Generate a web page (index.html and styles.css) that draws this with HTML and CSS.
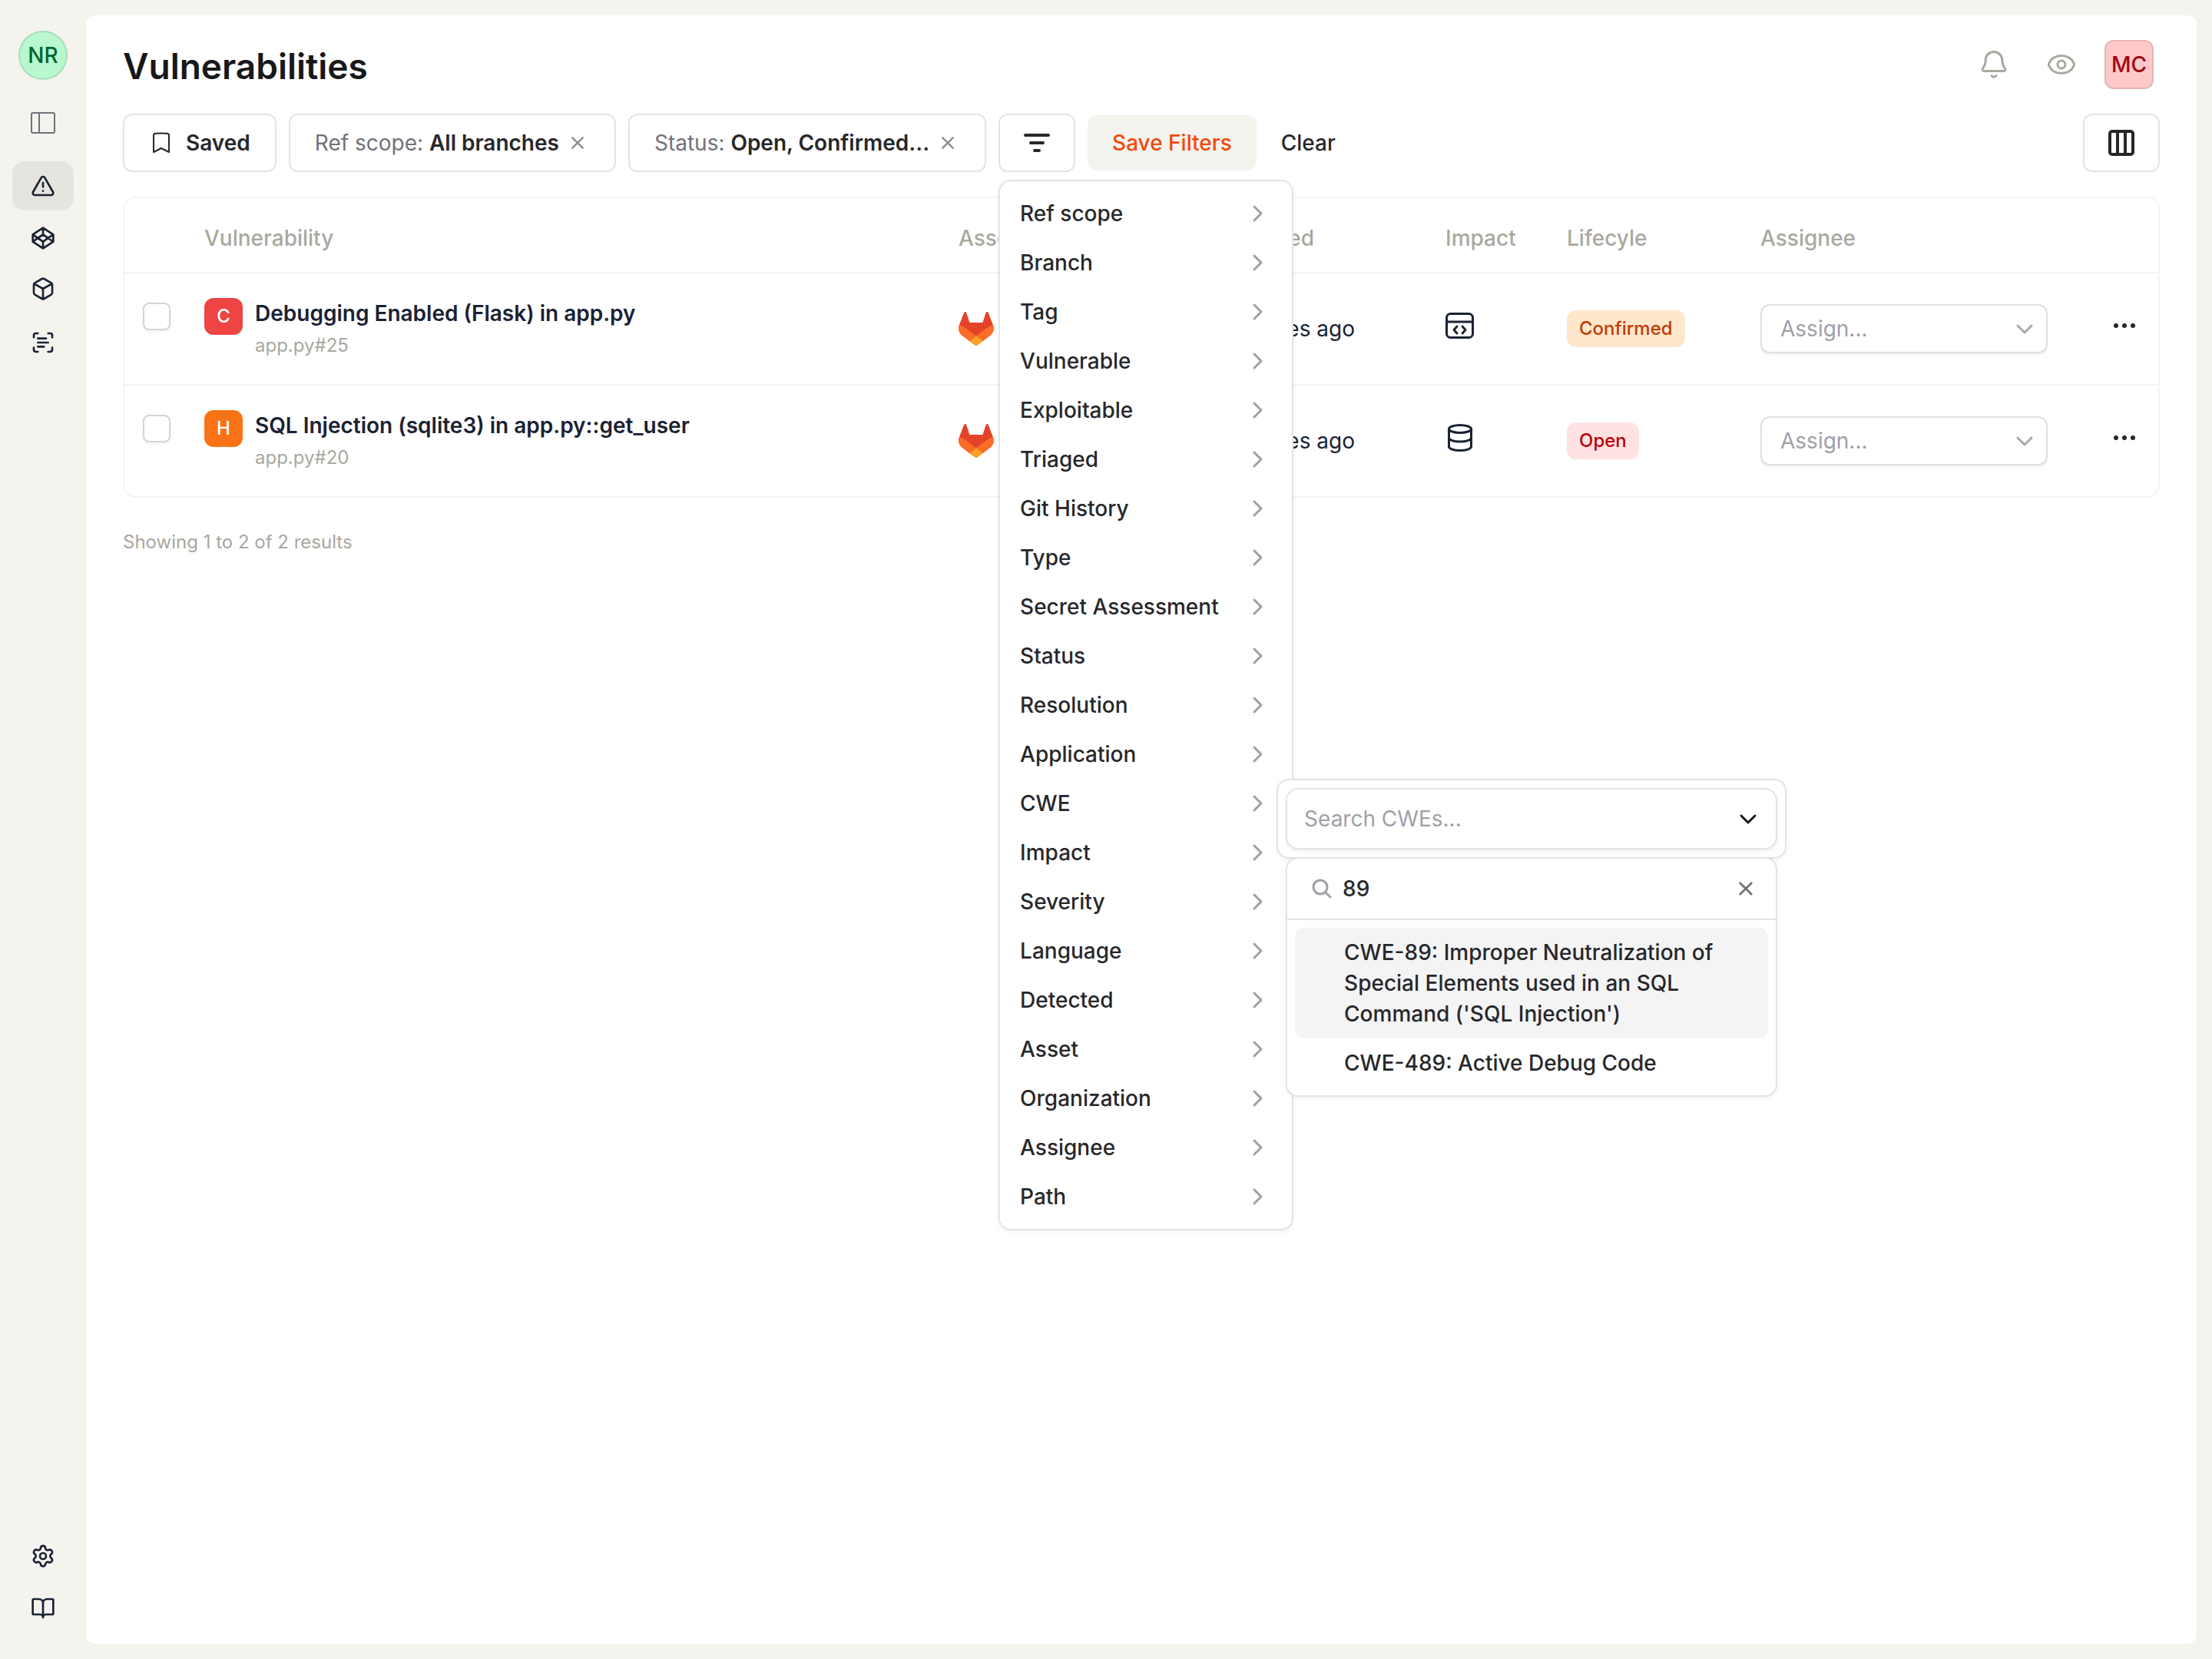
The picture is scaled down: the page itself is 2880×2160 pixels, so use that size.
FILE: index.html
```html
<!DOCTYPE html>
<html lang="en">

<head>
  <meta charset="UTF-8">
  <meta name="viewport" content="width=device-width, initial-scale=1">
  <title>Vulnerabilities</title>
  <link rel="stylesheet" href="styles.css">
</head>

<body>

  <!-- shared icons -->
  <svg class="sprite" aria-hidden="true">
    <symbol id="chevron-right" viewBox="0 0 24 24"><path d="M7 3l9 9-9 9"/></symbol>
    <symbol id="chevron-down" viewBox="0 0 24 24"><path d="M3 8l9 9 9-9"/></symbol>
    <symbol id="cross" viewBox="0 0 24 24"><path d="M4 4l16 16M20 4L4 20"/></symbol>
    <symbol id="dots" viewBox="0 0 36 8"><circle cx="7" cy="4" r="3"/><circle cx="18" cy="4" r="3"/><circle cx="29" cy="4" r="3"/></symbol>
    <symbol id="gitlab" viewBox="0 0 25 24">
      <path fill="#e24329" d="M24.507 9.5l-.034-.09L21.082.562a.896.896 0 0 0-1.694.091l-2.29 7.01H7.825L5.535.653a.898.898 0 0 0-1.694-.09L.451 9.411.416 9.5a6.297 6.297 0 0 0 2.09 7.278l.012.01.03.022 5.16 3.867 2.56 1.935 1.554 1.176a1.051 1.051 0 0 0 1.268 0l1.555-1.176 2.56-1.935 5.197-3.89.014-.01A6.297 6.297 0 0 0 24.507 9.5z"/>
      <path fill="#fc6d26" d="M24.507 9.5l-.034-.09a11.44 11.44 0 0 0-4.56 2.051l-7.447 5.632 4.742 3.584 5.197-3.89.014-.01A6.297 6.297 0 0 0 24.507 9.5z"/>
      <path fill="#fca326" d="M7.707 20.677l2.56 1.935 1.555 1.176a1.051 1.051 0 0 0 1.268 0l1.555-1.176 2.56-1.935-4.743-3.584-4.755 3.584z"/>
      <path fill="#fc6d26" d="M5.01 11.461a11.43 11.43 0 0 0-4.56-2.05L.416 9.5a6.297 6.297 0 0 0 2.09 7.278l.012.01.03.022 5.16 3.867 4.745-3.584-7.444-5.632z"/>
    </symbol>
  </svg>

  <aside class="sidebar">
    <button class="avatar avatar-org">NR</button>
    <button class="nav-item toggle" aria-label="Toggle sidebar">
      <svg class="icon" viewBox="0 0 32 32"><rect x="1" y="3" width="30" height="26" rx="2"/><path d="M11 3v26"/></svg>
    </button>
    <nav class="nav">
      <a href="#" class="nav-item active" aria-label="Vulnerabilities">
        <svg class="icon" viewBox="0 0 24 24"><path d="M21.73 18l-8-14a2 2 0 0 0-3.48 0l-8 14A2 2 0 0 0 4 21h16a2 2 0 0 0 1.73-3M12 9v4M12 17h.01"/></svg>
      </a>
      <a href="#" class="nav-item" aria-label="Assets">
        <svg class="icon" viewBox="0 0 24 24"><path d="M12 2l10 6.500v7L12 22 2 15.500v-7zM12 22v-6.500M22 8.500l-10 7-10-7M2 15.500l10-7 10 7M12 2v6.500"/></svg>
      </a>
      <a href="#" class="nav-item" aria-label="Packages">
        <svg class="icon icon-box" viewBox="0 0 24 24"><path d="M21 8a2 2 0 0 0-1-1.730l-7-4a2 2 0 0 0-2 0l-7 4A2 2 0 0 0 3 8v8a2 2 0 0 0 1 1.730l7 4a2 2 0 0 0 2 0l7-4A2 2 0 0 0 21 16ZM3.300 7l8.700 5 8.700-5M12 22V12"/></svg>
      </a>
      <a href="#" class="nav-item" aria-label="Scans">
        <svg class="icon" viewBox="0 0 24 24"><path d="M3 7V5a2 2 0 0 1 2-2h2M17 3h2a2 2 0 0 1 2 2v2M21 17v2a2 2 0 0 1-2 2h-2M7 21H5a2 2 0 0 1-2-2v-2M7 8h8M7 12h10M7 16h6"/></svg>
      </a>
    </nav>
    <nav class="nav nav-bottom">
      <a href="#" class="nav-item" aria-label="Settings">
        <svg class="icon" viewBox="0 0 24 24"><path d="M9.671 4.136a2.34 2.34 0 0 1 4.659 0 2.34 2.34 0 0 0 3.319 1.915 2.34 2.34 0 0 1 2.33 4.033 2.34 2.34 0 0 0 0 3.831 2.34 2.34 0 0 1-2.33 4.033 2.34 2.34 0 0 0-3.319 1.915 2.34 2.34 0 0 1-4.659 0 2.34 2.34 0 0 0-3.32-1.915 2.34 2.34 0 0 1-2.33-4.033 2.34 2.34 0 0 0 0-3.831A2.34 2.34 0 0 1 6.35 6.051a2.34 2.34 0 0 0 3.319-1.915"/><circle cx="12" cy="12" r="3"/></svg>
      </a>
      <a href="#" class="nav-item" aria-label="Documentation">
        <svg class="icon" viewBox="0 0 24 24"><path d="M12 7v14M3 18a1 1 0 0 1-1-1V4a1 1 0 0 1 1-1h5a4 4 0 0 1 4 4 4 4 0 0 1 4-4h5a1 1 0 0 1 1 1v13a1 1 0 0 1-1 1h-6a3 3 0 0 0-3 3 3 3 0 0 0-3-3z"/></svg>
      </a>
    </nav>
  </aside>

  <main class="main">
    <header class="header">
      <h1>Vulnerabilities</h1>
      <div class="header-actions">
        <button class="header-btn" aria-label="Notifications">
          <svg viewBox="0 0 48 48"><path d="M24 7.500c-6.200 0-10.600 4.800-10.800 10.500-.2 6-1.200 8-3.400 10.600-1.400 1.600-.6 3.900 1.500 3.900h25.400c2.100 0 2.900-2.300 1.500-3.900-2.200-2.600-3.200-4.600-3.400-10.600-.2-5.700-4.600-10.500-10.800-10.500zM21 38.500c1.200 2.200 4.800 2.200 6 0"/></svg>
        </button>
        <button class="header-btn" aria-label="Watching">
          <svg viewBox="0 0 48 48"><path d="M7.800 22.300C10.500 16.500 16.500 12.500 24 12.500s13.500 4 16.200 9.800c.5 1.100.5 2.300 0 3.400C37.500 31.500 31.500 35.500 24 35.500S10.500 31.500 7.800 25.700c-.5-1.100-.5-2.300 0-3.400z"/><circle cx="24" cy="24" r="5"/></svg>
        </button>
        <button class="avatar avatar-user">MC</button>
      </div>
    </header>

    <div class="toolbar">
      <button class="btn saved">
        <svg class="bookmark" viewBox="0 0 24 28"><path d="M2 26V4c0-1.500 1-2 2.500-2.200 5-.4 10-.4 15 0C21 2 22 2.500 22 4v22l-10-5z"/></svg>
        Saved
      </button>
      <div class="btn chip">
        <span>Ref scope: <b>All branches</b></span>
        <button class="chip-close" aria-label="Remove ref scope filter"><svg><use href="#cross"/></svg></button>
      </div>
      <div class="btn chip">
        <span>Status: <b>Open, Confirmed...</b></span>
        <button class="chip-close" aria-label="Remove status filter"><svg><use href="#cross"/></svg></button>
      </div>

      <div class="filter">
        <button class="btn btn-icon" aria-label="Add filter">
          <svg class="filter-icon" viewBox="0 0 36 36"><path d="M3 8h30M10 18h16M15 28h6"/></svg>
        </button>
        <ul class="menu">
          <li><button class="menu-item">Ref scope<svg><use href="#chevron-right"/></svg></button></li>
          <li><button class="menu-item">Branch<svg><use href="#chevron-right"/></svg></button></li>
          <li><button class="menu-item">Tag<svg><use href="#chevron-right"/></svg></button></li>
          <li><button class="menu-item">Vulnerable<svg><use href="#chevron-right"/></svg></button></li>
          <li><button class="menu-item">Exploitable<svg><use href="#chevron-right"/></svg></button></li>
          <li><button class="menu-item">Triaged<svg><use href="#chevron-right"/></svg></button></li>
          <li><button class="menu-item">Git History<svg><use href="#chevron-right"/></svg></button></li>
          <li><button class="menu-item">Type<svg><use href="#chevron-right"/></svg></button></li>
          <li><button class="menu-item">Secret Assessment<svg><use href="#chevron-right"/></svg></button></li>
          <li><button class="menu-item">Status<svg><use href="#chevron-right"/></svg></button></li>
          <li><button class="menu-item">Resolution<svg><use href="#chevron-right"/></svg></button></li>
          <li><button class="menu-item">Application<svg><use href="#chevron-right"/></svg></button></li>
          <li class="has-submenu">
            <button class="menu-item">CWE<svg><use href="#chevron-right"/></svg></button>
            <div class="submenu">
              <button class="combo">Search CWEs...<svg><use href="#chevron-down"/></svg></button>
              <div class="listbox">
                <div class="search">
                  <svg class="search-icon" viewBox="0 0 26 26"><circle cx="11" cy="11" r="9"/><path d="M18 18l6 6"/></svg>
                  <input type="text" value="89" aria-label="Search CWEs">
                  <button class="search-clear" aria-label="Clear search"><svg><use href="#cross"/></svg></button>
                </div>
                <ul class="options">
                  <li class="option selected">CWE-89: Improper Neutralization of Special Elements used in an SQL Command ('SQL Injection')</li>
                  <li class="option">CWE-489: Active Debug Code</li>
                </ul>
              </div>
            </div>
          </li>
          <li><button class="menu-item">Impact<svg><use href="#chevron-right"/></svg></button></li>
          <li><button class="menu-item">Severity<svg><use href="#chevron-right"/></svg></button></li>
          <li><button class="menu-item">Language<svg><use href="#chevron-right"/></svg></button></li>
          <li><button class="menu-item">Detected<svg><use href="#chevron-right"/></svg></button></li>
          <li><button class="menu-item">Asset<svg><use href="#chevron-right"/></svg></button></li>
          <li><button class="menu-item">Organization<svg><use href="#chevron-right"/></svg></button></li>
          <li><button class="menu-item">Assignee<svg><use href="#chevron-right"/></svg></button></li>
          <li><button class="menu-item">Path<svg><use href="#chevron-right"/></svg></button></li>
        </ul>
      </div>

      <button class="btn-save">Save Filters</button>
      <button class="btn-clear">Clear</button>
      <button class="btn btn-icon columns" aria-label="Columns">
        <svg class="columns-icon" viewBox="0 0 36 36"><rect x="3" y="3" width="30" height="30" rx="3"/><path d="M13 3v30M23 3v30"/></svg>
      </button>
    </div>

    <div class="table-wrap">
      <table class="table">
        <colgroup>
          <col class="col-check">
          <col>
          <col class="col-asset">
          <col class="col-discovered">
          <col class="col-impact">
          <col class="col-lifecycle">
          <col class="col-assignee">
          <col class="col-actions">
        </colgroup>
        <thead>
          <tr>
            <th></th>
            <th>Vulnerability</th>
            <th>Asset</th>
            <th>Discovered</th>
            <th>Impact</th>
            <th>Lifecyle</th>
            <th>Assignee</th>
            <th></th>
          </tr>
        </thead>
        <tbody>
          <tr>
            <td class="cell-check"><input type="checkbox" class="checkbox" aria-label="Select Debugging Enabled"></td>
            <td>
              <div class="vuln">
                <span class="severity critical">C</span>
                <div>
                  <a href="#" class="vuln-title">Debugging Enabled (Flask) in app.py</a>
                  <div class="vuln-path">app.py#25</div>
                </div>
              </div>
            </td>
            <td><svg class="gitlab"><use href="#gitlab"/></svg></td>
            <td>22 minutes ago</td>
            <td class="cell-raised"><svg class="impact" viewBox="0 0 38 38"><rect x="1.500" y="3.500" width="34" height="31" rx="5"/><path d="M1.500 14h34M15 20l-4 4.500 4 4.500M22 20l4 4.500-4 4.500"/></svg></td>
            <td><span class="badge confirmed">Confirmed</span></td>
            <td>
              <div class="select">
                <select aria-label="Assignee"><option>Assign...</option></select>
                <svg><use href="#chevron-down"/></svg>
              </div>
            </td>
            <td class="cell-raised"><button class="more" aria-label="More actions"><svg><use href="#dots"/></svg></button></td>
          </tr>
          <tr>
            <td class="cell-check"><input type="checkbox" class="checkbox" aria-label="Select SQL Injection"></td>
            <td>
              <div class="vuln">
                <span class="severity high">H</span>
                <div>
                  <a href="#" class="vuln-title">SQL Injection (sqlite3) in app.py::get_user</a>
                  <div class="vuln-path">app.py#20</div>
                </div>
              </div>
            </td>
            <td><svg class="gitlab"><use href="#gitlab"/></svg></td>
            <td>22 minutes ago</td>
            <td class="cell-raised"><svg class="impact" viewBox="0 0 38 38"><ellipse cx="19" cy="7.500" rx="14.500" ry="5"/><path d="M4.500 7.500v23c0 2.800 6.500 5 14.500 5s14.500-2.200 14.500-5v-23M4.500 19c0 2.800 6.500 5 14.500 5s14.500-2.200 14.500-5"/></svg></td>
            <td><span class="badge open">Open</span></td>
            <td>
              <div class="select">
                <select aria-label="Assignee"><option>Assign...</option></select>
                <svg><use href="#chevron-down"/></svg>
              </div>
            </td>
            <td class="cell-raised"><button class="more" aria-label="More actions"><svg><use href="#dots"/></svg></button></td>
          </tr>
        </tbody>
      </table>
    </div>

    <p class="results">Showing 1 to 2 of 2 results</p>
  </main>

</body>

</html>
```
FILE: styles.css
```css
* {
  box-sizing: border-box;
}

body {
  margin: 0;
  min-height: 100vh;
  display: flex;
  background: #f4f3ee;
  color: #27272a;
  font-family: Inter, "Liberation Sans", sans-serif;
  font-size: 28px;
  line-height: 40px;
}

button,
input,
select {
  font: inherit;
  color: inherit;
}

button {
  padding: 0;
  border: 0;
  background: none;
  cursor: pointer;
}

ul {
  list-style: none;
  margin: 0;
  padding: 0;
}

a {
  color: inherit;
  text-decoration: none;
}

svg {
  display: block;
  flex-shrink: 0;
  fill: none;
  stroke: currentColor;
  stroke-width: 3;
  stroke-linecap: round;
  stroke-linejoin: round;
}

.sprite {
  display: none;
}

/* sidebar */
.sidebar {
  width: 112px;
  flex-shrink: 0;
  display: flex;
  flex-direction: column;
  align-items: center;
  padding: 40px 0 34px;
  color: #1a2233;
}

.avatar {
  width: 64px;
  height: 64px;
  font-weight: 500;
  border: 2px solid rgba(0, 0, 0, 0.1);
}

.avatar-org {
  border-radius: 50%;
  background: #b9f8cf;
  color: #016630;
}

.avatar-user {
  margin-left: 12px;
  border-radius: 12px;
  background: #ffc9c9;
  color: #9f0712;
}

.nav {
  display: flex;
  flex-direction: column;
  gap: 4px;
}

.nav-bottom {
  margin-top: auto;
}

.nav-item {
  width: 80px;
  height: 64px;
  display: flex;
  align-items: center;
  justify-content: center;
  border-radius: 16px;
}

.nav-item.active {
  background: #e5e4de;
}

.toggle {
  margin: 24px 0 18px;
  color: #71717a;
}

.icon {
  width: 32px;
  height: 32px;
  stroke-width: 2;
}

.icon-box {
  margin-bottom: 4px;
}

/* main */
.main {
  flex: 1;
  min-width: 0;
  margin: 20px 20px 20px 0;
  padding: 32px 48px;
  border-radius: 12px;
  background: #fff;
}

.header {
  display: flex;
  align-items: center;
  justify-content: space-between;
  padding-right: 8px;
  margin-bottom: 32px;
}

h1 {
  margin: 0;
  padding-top: 4px;
  font-size: 46px;
  line-height: 60px;
  font-weight: 600;
  color: #18181b;
}

.header-actions {
  display: flex;
  align-items: center;
}

.header-btn {
  width: 88px;
  display: flex;
  justify-content: center;
  color: #a9a89f;
}

.header-btn svg {
  width: 48px;
  height: 48px;
}

/* toolbar */
.toolbar {
  display: flex;
  align-items: center;
  gap: 16px;
  margin-bottom: 32px;
}

.btn {
  height: 76px;
  display: flex;
  align-items: center;
  justify-content: center;
  border: 2px solid #e4e4e7;
  border-radius: 12px;
  background: #fff;
}

.saved {
  gap: 20px;
  padding: 0 32px 0 36px;
  font-weight: 600;
}

.bookmark {
  width: 24px;
  height: 28px;
  stroke-width: 2;
}

.chip {
  gap: 14px;
  padding: 0 38px 0 32px;
  color: #71717a;
}

.chip b {
  font-weight: 600;
  color: #27272a;
}

.chip-close {
  color: #8e8e95;
}

.chip-close svg {
  width: 20px;
  height: 20px;
}

.btn-icon {
  width: 100px;
}

.filter-icon,
.columns-icon {
  width: 36px;
  height: 36px;
  stroke-width: 4;
}

.btn-save {
  height: 72px;
  padding: 0 32px;
  border-radius: 12px;
  background: #f4f3ee;
  color: #f04a0c;
  font-weight: 500;
}

.btn-clear {
  height: 72px;
  padding: 0 16px;
  font-weight: 500;
}

.columns {
  margin-left: auto;
}

/* filter menu */
.filter {
  position: relative;
}

.menu {
  position: absolute;
  z-index: 10;
  top: calc(100% + 10px);
  left: 0;
  width: 384px;
  padding: 10px;
  border: 2px solid #e4e4e7;
  border-radius: 16px;
  background: #fff;
  font-weight: 500;
  box-shadow: 0 2px 6px rgba(0, 0, 0, 0.06);
}

.menu-item {
  width: 100%;
  height: 64px;
  padding: 0 22px 0 16px;
  display: flex;
  align-items: center;
  justify-content: space-between;
}

.menu-item svg {
  width: 24px;
  height: 24px;
  color: #9f9fa9;
}

.has-submenu {
  position: relative;
}

.submenu {
  position: absolute;
  top: 0;
  left: calc(100% - 10px);
  width: 664px;
  padding: 10px;
  border: 2px solid #e4e4e7;
  border-radius: 16px;
  background: #fff;
  box-shadow: 0 2px 6px rgba(0, 0, 0, 0.06);
}

.combo {
  width: 100%;
  height: 80px;
  padding: 0 24px 0 22px;
  display: flex;
  align-items: center;
  justify-content: space-between;
  border: 2px solid #e4e4e7;
  border-radius: 16px;
  font-weight: 400;
  color: #9f9fa9;
  box-shadow: 0 2px 4px rgba(0, 0, 0, 0.08);
}

.combo svg {
  width: 24px;
  height: 24px;
  color: #18181b;
}

.listbox {
  position: absolute;
  top: 100%;
  left: 10px;
  right: 10px;
  border: 2px solid #e4e4e7;
  border-radius: 16px;
  background: #fff;
  box-shadow: 0 2px 6px rgba(0, 0, 0, 0.06);
}

.search {
  height: 80px;
  padding: 0 28px 0 32px;
  display: flex;
  align-items: center;
  gap: 14px;
  border-bottom: 2px solid #e4e4e7;
}

.search-icon {
  width: 26px;
  height: 26px;
  color: #9f9fa9;
}

.search input {
  flex: 1;
  min-width: 0;
  padding: 0;
  border: 0;
  outline: 0;
  background: none;
}

.search-clear {
  color: #71717a;
}

.search-clear svg {
  width: 22px;
  height: 22px;
}

.options {
  padding: 10px;
}

.option {
  padding: 12px 40px 12px 64px;
  border-radius: 12px;
}

.option.selected {
  background: #f4f4f5;
}

/* table */
.table-wrap {
  border: 2px solid #f4f3ee;
  border-radius: 16px;
}

.table {
  width: 100%;
  table-layout: fixed;
  border-collapse: separate;
  border-spacing: 0;
}

.col-check {
  width: 104px;
}

.col-asset {
  width: 312px;
}

.col-discovered {
  width: 322px;
}

.col-impact {
  width: 158px;
}

.col-lifecycle {
  width: 252px;
}

.col-assignee {
  width: 442px;
}

.col-actions {
  width: 76px;
}

th {
  padding: 32px 0 24px;
  border-bottom: 2px solid #f4f3ee;
  text-align: left;
  font-weight: 500;
  color: #a9a89f;
}

td {
  padding: 32px 0;
  color: #1a2233;
}

tr:not(:last-child) td {
  border-bottom: 2px solid #f4f3ee;
}

td.cell-check {
  padding: 38px 24px;
  vertical-align: top;
}

td.cell-raised {
  padding-bottom: 40px;
}

.checkbox {
  display: block;
  appearance: none;
  width: 36px;
  height: 36px;
  margin: 0;
  border: 2px solid #d4d4d8;
  border-radius: 8px;
  background: #fff;
  box-shadow: 0 2px 4px rgba(0, 0, 0, 0.05);
}

.vuln {
  display: flex;
  gap: 16px;
}

.severity {
  width: 50px;
  height: 48px;
  border-radius: 12px;
  color: #fff;
  font-size: 24px;
  line-height: 48px;
  font-weight: 500;
  text-align: center;
}

.critical {
  background: #ef4444;
}

.high {
  background: #f97316;
}

.vuln-title {
  font-weight: 600;
}

.vuln-path {
  margin-top: 4px;
  font-size: 24px;
  line-height: 36px;
  color: #a9a89f;
}

.gitlab {
  width: 46px;
  height: 44px;
  stroke: none;
}

.impact {
  width: 38px;
  height: 38px;
}

.badge {
  display: inline-block;
  padding: 0 16px;
  border-radius: 12px;
  font-size: 24px;
  line-height: 48px;
  font-weight: 500;
}

.confirmed {
  background: #ffe7cc;
  color: #c43a06;
}

.open {
  background: #ffe2e2;
  color: #b80009;
}

/* the arrow shares the grid cell with the select */
.select {
  width: 374px;
  display: grid;
  align-items: center;
}

.select select {
  grid-area: 1 / 1;
  height: 64px;
  padding: 0 24px;
  appearance: none;
  border: 2px solid #e0e0e3;
  border-radius: 12px;
  background: #fff;
  color: #9f9fa9;
  box-shadow: 0 2px 4px rgba(0, 0, 0, 0.06);
}

.select svg {
  grid-area: 1 / 1;
  justify-self: end;
  width: 24px;
  height: 24px;
  margin-right: 18px;
  color: #a9a9b1;
  pointer-events: none;
}

.more {
  display: block;
  margin-left: 14px;
  color: #27272a;
}

.more svg {
  width: 36px;
  height: 8px;
  fill: currentColor;
  stroke: none;
}

.results {
  margin: 38px 0 0;
  font-size: 24px;
  color: #a9a89f;
}
```
